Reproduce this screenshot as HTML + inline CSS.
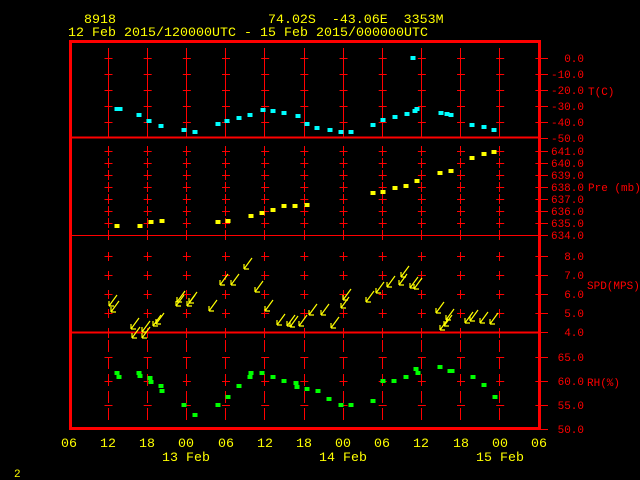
<!DOCTYPE html>
<html><head><style>
html,body{margin:0;padding:0;background:#000;width:640px;height:480px;overflow:hidden}
svg{display:block}
text{font-family:"Liberation Mono",monospace}
</style></head><body>
<svg width="640" height="480" viewBox="0 0 640 480" xmlns="http://www.w3.org/2000/svg">
<defs>
<g id="a" stroke="#ff0" stroke-width="1.2" fill="none"><path d="M0 0 L8 -11 M0 0 V-5 M0 0 H5"/></g>
<rect id="c" x="-2.5" y="-2" width="5" height="4" fill="#0ff"/>
<rect id="y" x="-2.5" y="-2" width="5" height="4" fill="#ff0"/>
<rect id="g" x="-2.5" y="-2" width="5" height="4" fill="#0f0"/>
</defs>
<g font-size="13.3" fill="#ff0">
<text x="84" y="23">8918</text>
<text x="268" y="23" xml:space="preserve">74.02S  -43.06E  3353M</text>
<text x="68" y="36" textLength="360">12 Feb 2015/120000UTC - 15 Feb 2015/000000UTC</text>
</g>
<!-- vertical grid -->
<g stroke="#f00" stroke-width="1">
<path d="M108.5 48V137M147.5 48V137M186.5 48V137M225.5 48V137M264.5 48V137M304.5 48V137M343.5 48V137M382.5 48V137M421.5 48V137M460.5 48V137M499.5 48V137"/>
<path stroke-dasharray="10 2" d="M108.5 146V235M147.5 146V235M186.5 146V235M225.5 146V235M264.5 146V235M304.5 146V235M343.5 146V235M382.5 146V235M421.5 146V235M460.5 146V235M499.5 146V235"/>
<path stroke-dasharray="12 5" d="M108.5 340V420M147.5 340V420M186.5 340V420M225.5 340V420M264.5 340V420M304.5 340V420M343.5 340V420M382.5 340V420M421.5 340V420M460.5 340V420M499.5 340V420"/>
<path d="M108.5 252V261M147.5 252V261M186.5 252V261M225.5 252V261M264.5 252V261M304.5 252V261M343.5 252V261M382.5 252V261M421.5 252V261M460.5 252V261M499.5 252V261"/>
<path d="M108.5 271V280M147.5 271V280M186.5 271V280M225.5 271V280M264.5 271V280M304.5 271V280M343.5 271V280M382.5 271V280M421.5 271V280M460.5 271V280M499.5 271V280"/>
<path d="M108.5 290V299M147.5 290V299M186.5 290V299M225.5 290V299M264.5 290V299M304.5 290V299M343.5 290V299M382.5 290V299M421.5 290V299M460.5 290V299M499.5 290V299"/>
<path d="M108.5 309V318M147.5 309V318M186.5 309V318M225.5 309V318M264.5 309V318M304.5 309V318M343.5 309V318M382.5 309V318M421.5 309V318M460.5 309V318M499.5 309V318"/>
<path d="M108.5 328V338M147.5 328V338M186.5 328V338M225.5 328V338M264.5 328V338M304.5 328V338M343.5 328V338M382.5 328V338M421.5 328V338M460.5 328V338M499.5 328V338"/>
<path d="M108.5 231V240M147.5 231V240M186.5 231V240M225.5 231V240M264.5 231V240M304.5 231V240M343.5 231V240M382.5 231V240M421.5 231V240M460.5 231V240M499.5 231V240"/>
<g stroke-dasharray="8 31.17">
<path d="M104.5 58.5H540M104.5 74.5H540M104.5 90.5H540M104.5 106.5H540M104.5 122.5H540"/>
<path d="M104.5 151.5H540M104.5 163.5H540M104.5 175.5H540M104.5 187.5H540M104.5 199.5H540M104.5 211.5H540M104.5 223.5H540"/>
<path d="M104.5 256.5H540M104.5 275.5H540M104.5 294.5H540M104.5 313.5H540"/>
<path d="M104.5 357.5H540M104.5 381.5H540M104.5 405.5H540"/>
</g>
<path d="M70 137.5H540M70 332.5H540" stroke-width="2"/>
<path d="M70 235.5H540"/>
<!-- right ticks -->
<path d="M541 58.5h7M541 74.5h7M541 90.5h7M541 106.5h7M541 122.5h7M541 138.5h7M541 151.5h7M541 163.5h7M541 175.5h7M541 187.5h7M541 199.5h7M541 211.5h7M541 223.5h7M541 235.5h7M541 256.5h7M541 275.5h7M541 294.5h7M541 313.5h7M541 332.5h7M541 357.5h7M541 381.5h7M541 405.5h7M541 429.5h7"/>
</g>
<rect x="70.5" y="41.5" width="469" height="387" fill="none" stroke="#f00" stroke-width="3"/>
<!-- right labels -->
<g font-size="11" fill="#f00" text-anchor="end">
<text x="584" y="62">0.0</text><text x="584" y="78">-10.0</text><text x="584" y="94">-20.0</text><text x="584" y="110">-30.0</text><text x="584" y="126">-40.0</text><text x="584" y="142">-50.0</text>
<text x="584" y="155">641.0</text><text x="584" y="167">640.0</text><text x="584" y="179">639.0</text><text x="584" y="191">638.0</text><text x="584" y="203">637.0</text><text x="584" y="215">636.0</text><text x="584" y="227">635.0</text><text x="584" y="239">634.0</text>
<text x="584" y="260">8.0</text><text x="584" y="279">7.0</text><text x="584" y="298">6.0</text><text x="584" y="317">5.0</text><text x="584" y="336">4.0</text>
<text x="584" y="361">65.0</text><text x="584" y="385">60.0</text><text x="584" y="409">55.0</text><text x="584" y="433">50.0</text>
</g>
<g font-size="11" fill="#f00">
<text x="588" y="95">T(C)</text>
<text x="588" y="191">Pre (mb)</text>
<text x="587" y="289">SPD(MPS)</text>
<text x="587" y="386">RH(%)</text>
</g>
<!-- bottom labels -->
<g font-size="13.3" fill="#ff0" text-anchor="middle">
<text x="69" y="447">06</text><text x="108" y="447">12</text><text x="147" y="447">18</text><text x="186" y="447">00</text><text x="226" y="447">06</text><text x="265" y="447">12</text><text x="304" y="447">18</text><text x="343" y="447">00</text><text x="382" y="447">06</text><text x="421" y="447">12</text><text x="461" y="447">18</text><text x="500" y="447">00</text><text x="539" y="447">06</text>
<text x="186" y="461">13 Feb</text><text x="343" y="461">14 Feb</text><text x="500" y="461">15 Feb</text>
</g>
<text x="14" y="477" font-size="11" fill="#ff0">2</text>
<!-- temperature -->
<g>
<use href="#c" x="117" y="109"/><use href="#c" x="120" y="109"/><use href="#c" x="139" y="115"/><use href="#c" x="149" y="121"/><use href="#c" x="161" y="126"/><use href="#c" x="184" y="130"/><use href="#c" x="195" y="132"/><use href="#c" x="218" y="124"/><use href="#c" x="227" y="121"/><use href="#c" x="239" y="118"/><use href="#c" x="250" y="115"/><use href="#c" x="263" y="110"/><use href="#c" x="273" y="111"/><use href="#c" x="284" y="113"/><use href="#c" x="298" y="116"/><use href="#c" x="307" y="124"/><use href="#c" x="317" y="128"/><use href="#c" x="330" y="130"/><use href="#c" x="341" y="132"/><use href="#c" x="351" y="132"/><use href="#c" x="373" y="125"/><use href="#c" x="383" y="120"/><use href="#c" x="395" y="117"/><use href="#c" x="407" y="114"/><use href="#c" x="415" y="111"/><use href="#c" x="417" y="109"/><use href="#c" x="413" y="58"/><use href="#c" x="441" y="113"/><use href="#c" x="447" y="114"/><use href="#c" x="451" y="115"/><use href="#c" x="472" y="125"/><use href="#c" x="484" y="127"/><use href="#c" x="494" y="130"/>
</g>
<!-- pressure -->
<g>
<use href="#y" x="117" y="226"/><use href="#y" x="140" y="226"/><use href="#y" x="151" y="222"/><use href="#y" x="162" y="221"/><use href="#y" x="218" y="222"/><use href="#y" x="228" y="221"/><use href="#y" x="251" y="216"/><use href="#y" x="262" y="213"/><use href="#y" x="273" y="210"/><use href="#y" x="284" y="206"/><use href="#y" x="295" y="206"/><use href="#y" x="307" y="205"/><use href="#y" x="373" y="193"/><use href="#y" x="383" y="192"/><use href="#y" x="395" y="188"/><use href="#y" x="406" y="186"/><use href="#y" x="417" y="181"/><use href="#y" x="440" y="173"/><use href="#y" x="451" y="171"/><use href="#y" x="472" y="158"/><use href="#y" x="484" y="154"/><use href="#y" x="494" y="152"/>
</g>
<!-- wind -->
<g>
<use href="#a" x="109" y="306"/><use href="#a" x="111" y="312"/><use href="#a" x="131" y="329"/><use href="#a" x="132" y="338"/><use href="#a" x="142" y="338"/><use href="#a" x="142" y="332"/><use href="#a" x="153" y="326"/><use href="#a" x="156" y="324"/><use href="#a" x="176" y="306"/><use href="#a" x="177" y="302"/><use href="#a" x="187" y="306"/><use href="#a" x="189" y="303"/><use href="#a" x="209" y="311"/><use href="#a" x="220" y="285"/><use href="#a" x="231" y="285"/><use href="#a" x="244" y="269"/><use href="#a" x="255" y="292"/><use href="#a" x="265" y="311"/><use href="#a" x="277" y="325"/><use href="#a" x="287" y="326"/><use href="#a" x="290" y="327"/><use href="#a" x="299" y="326"/><use href="#a" x="309" y="315"/><use href="#a" x="321" y="315"/><use href="#a" x="331" y="328"/><use href="#a" x="341" y="308"/><use href="#a" x="343" y="300"/><use href="#a" x="366" y="302"/><use href="#a" x="376" y="293"/><use href="#a" x="387" y="287"/><use href="#a" x="399" y="285"/><use href="#a" x="401" y="277"/><use href="#a" x="410" y="288"/><use href="#a" x="414" y="289"/><use href="#a" x="436" y="313"/><use href="#a" x="440" y="330"/><use href="#a" x="444" y="326"/><use href="#a" x="446" y="320"/><use href="#a" x="465" y="323"/><use href="#a" x="470" y="321"/><use href="#a" x="480" y="323"/><use href="#a" x="490" y="324"/>
</g>
<!-- RH -->
<g>
<use href="#g" x="117" y="373"/><use href="#g" x="119" y="377"/><use href="#g" x="139" y="373"/><use href="#g" x="140" y="376"/><use href="#g" x="150" y="378"/><use href="#g" x="151" y="382"/><use href="#g" x="161" y="386"/><use href="#g" x="162" y="391"/><use href="#g" x="184" y="405"/><use href="#g" x="195" y="415"/><use href="#g" x="218" y="405"/><use href="#g" x="228" y="397"/><use href="#g" x="239" y="386"/><use href="#g" x="251" y="373"/><use href="#g" x="250" y="377"/><use href="#g" x="262" y="373"/><use href="#g" x="273" y="377"/><use href="#g" x="284" y="381"/><use href="#g" x="296" y="383"/><use href="#g" x="297" y="387"/><use href="#g" x="307" y="389"/><use href="#g" x="318" y="391"/><use href="#g" x="329" y="399"/><use href="#g" x="341" y="405"/><use href="#g" x="351" y="405"/><use href="#g" x="373" y="401"/><use href="#g" x="383" y="381"/><use href="#g" x="394" y="381"/><use href="#g" x="406" y="377"/><use href="#g" x="416" y="369"/><use href="#g" x="418" y="373"/><use href="#g" x="440" y="367"/><use href="#g" x="450" y="371"/><use href="#g" x="452" y="371"/><use href="#g" x="473" y="377"/><use href="#g" x="484" y="385"/><use href="#g" x="495" y="397"/>
</g>
</svg>
</body></html>
